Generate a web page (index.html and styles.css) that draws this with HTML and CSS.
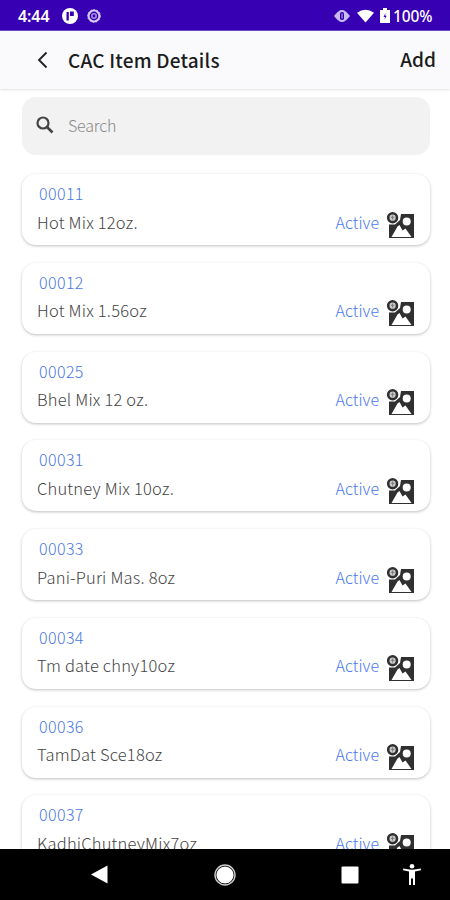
FILE: index.html
```html
<!DOCTYPE html>
<html lang="en">
<head>
<meta charset="utf-8">
<title>CAC Item Details</title>
<link rel="stylesheet" href="styles.css">
</head>
<body>
<svg width="0" height="0" class="defs" aria-hidden="true">
  <symbol id="picture" viewBox="0 0 28 28">
    <path d="M14 3H27V27H2V13.500L8 13.500L13 9Z" fill="#303030"/>
    <path d="M4.500 26L10.500 15.500L12.500 14L15.500 19.500L18.500 17.500L24.500 26Z" fill="#fff"/>
    <circle cx="19.700" cy="10.500" r="4" fill="#fff"/>
    <circle cx="5.600" cy="6.700" r="4.400" fill="#ccc" stroke="#303030" stroke-width="2.600"/>
    <path d="M3.800 6.300H7.400M5.600 4.500V8.500" stroke="#777" stroke-width="1"/>
  </symbol>
</svg>
<div class="phone">
  <div class="status">
    <span class="time">4:44</span>
    <svg class="s-p" width="16" height="16" viewBox="0 0 16 16"><circle cx="8" cy="8" r="8" fill="#fff"/><path d="M4.500 4H6.800V12.500H4.500ZM8 3.500H11.800V8H8Z" fill="#3700b3"/></svg>
    <svg class="s-c" width="14" height="14" viewBox="0 0 14 14"><g fill="none" stroke="#d5c9f2"><circle cx="7" cy="7" r="5.400" stroke-width="2"/><circle cx="7" cy="7" r="6.400" stroke-width="1" stroke-dasharray="1.600 1.600"/><circle cx="7" cy="7" r="2.200" stroke-width="1.600" opacity=".7"/></g></svg>
    <span class="grow"></span>
    <svg width="16" height="14" viewBox="0 0 16 14"><path d="M0 7L4 2.500H12L16 7L12 11.500H4Z" fill="#c9bbed"/><rect x="4.500" y="1" width="7" height="12" rx="3" fill="#c9bbed"/><rect x="6" y="3" width="4" height="8" rx="1.800" fill="#3700b3"/><path d="M8 4.500V9.500" stroke="#c9bbed"/></svg>
    <svg class="s-w" width="17" height="14" viewBox="0 0 18 14"><path d="M0 3.500Q9-3 18 3.500L9 14Z" fill="#fff"/></svg>
    <svg class="s-b" width="10" height="15" viewBox="0 0 10 15"><path d="M3 0H7V2H10V15H0V2H3Z" fill="#fff"/><path d="M5.500 5L3.500 9H5L4.600 11.500L6.700 7.800H5.200Z" fill="#3700b3"/></svg>
    <span class="pct">100%</span>
  </div>
  <header class="bar">
    <svg width="12" height="18" viewBox="0 0 12 18"><path d="M10.500 1.500L3 9L10.500 16.500" fill="none" stroke="#222" stroke-width="1.900"/></svg>
    <h1>CAC Item Details</h1>
    <span class="add">Add</span>
  </header>
  <main>
    <div class="search">
      <svg width="18" height="18" viewBox="0 0 18 18"><circle cx="7" cy="7" r="5.500" fill="none" stroke="#444" stroke-width="2.200"/><path d="M11 11L16.500 16.500" stroke="#444" stroke-width="2.600"/></svg>
      <span>Search</span>
    </div>
    <div class="list">
      <div class="card"><div class="code">00011</div><div class="row"><span>Hot Mix 12oz.</span><b>Active</b><svg><use href="#picture"/></svg></div></div>
      <div class="card"><div class="code">00012</div><div class="row"><span>Hot Mix 1.56oz</span><b>Active</b><svg><use href="#picture"/></svg></div></div>
      <div class="card"><div class="code">00025</div><div class="row"><span>Bhel Mix 12 oz.</span><b>Active</b><svg><use href="#picture"/></svg></div></div>
      <div class="card"><div class="code">00031</div><div class="row"><span>Chutney Mix 10oz.</span><b>Active</b><svg><use href="#picture"/></svg></div></div>
      <div class="card"><div class="code">00033</div><div class="row"><span>Pani-Puri Mas. 8oz</span><b>Active</b><svg><use href="#picture"/></svg></div></div>
      <div class="card"><div class="code">00034</div><div class="row"><span>Tm date chny10oz</span><b>Active</b><svg><use href="#picture"/></svg></div></div>
      <div class="card"><div class="code">00036</div><div class="row"><span>TamDat Sce18oz</span><b>Active</b><svg><use href="#picture"/></svg></div></div>
      <div class="card"><div class="code">00037</div><div class="row"><span>KadhiChutneyMix7oz</span><b>Active</b><svg><use href="#picture"/></svg></div></div>
    </div>
  </main>
  <nav class="nav">
    <svg class="n-back" width="17" height="19" viewBox="0 0 17 19"><path d="M0 9.500L16.500 .5V18.500Z" fill="#fff"/></svg>
    <svg class="n-home" width="22" height="22" viewBox="0 0 22 22"><circle cx="11" cy="11" r="8.600" fill="#fff"/><circle cx="11" cy="11" r="10" fill="none" stroke="#ccc" stroke-width="1.400"/></svg>
    <svg class="n-sq" width="18" height="18" viewBox="0 0 18 18"><rect x=".5" y=".5" width="17" height="17" rx="1" fill="#fff"/></svg>
    <svg class="n-acc" width="18" height="21" viewBox="0 0 18 21"><circle cx="9" cy="2.300" r="2.300" fill="#fff"/><path d="M.3 4.500Q9 6.800 17.700 4.500L18 6.300L12 7.600V21H10V14.500H8V21H6V7.600L0 6.300Z" fill="#fff"/></svg>
  </nav>
</div>
</body>
</html>
```
FILE: styles.css
```css
* { box-sizing: border-box; }
body { margin: 0; background: #fff; font-family: "Noto Sans CJK SC", "Noto Sans", sans-serif; }
svg { display: block; flex: none; }
.defs { position: absolute; }
.phone { width: 450px; height: 900px; display: flex; flex-direction: column; overflow: hidden; }
.status { flex: none; height: 31px; background: #3700b3; color: #fff; display: flex; align-items: center; padding: 1px 17px 0 18px; font: 500 16px/20px "Noto Sans", sans-serif; border-bottom: 1px solid #6a4bc8; }
.time { width: 44px; letter-spacing: -.1px; font-weight: 600; }
.s-c { margin-left: 9px; }
.s-w { margin-left: 7px; }
.s-b { margin-left: 6px; }
.pct { width: 40px; margin-left: 3px; font-size: 15.500px; letter-spacing: -.1px; white-space: nowrap; }
.grow { flex: 1; }
.bar { flex: none; height: 58px; background: #fafafc; display: flex; align-items: center; padding: 0 14px 0 36px; box-shadow: 0 1px 2px rgba(0,0,0,.12); color: #1c1c1c; }
h1 { margin: 0 0 0 20px; font-size: 19px; line-height: 28px; font-weight: 500; flex: 1; letter-spacing: .2px; }
.add { font-size: 19px; line-height: 28px; font-weight: 500; margin-top: -2px; }
main { flex: 1; min-height: 0; overflow: hidden; padding: 8px 20px 0 22px; }
.search { height: 58px; border-radius: 14px; background: #f2f2f2; display: flex; align-items: center; padding-left: 14px; font-size: 16px; font-weight: 300; color: #888; }
.search span { margin: -2px 0 0 14px; letter-spacing: -.2px; }
.search svg { margin-top: -2px; }
.list { margin-top: 19px; display: flex; flex-direction: column; gap: 17.750px; }
.card { flex: none; height: 71px; border-radius: 14px; background: #fff; box-shadow: 0 1px 3px rgba(0,0,0,.25); padding: 7px 15px 0; font-weight: 300; }
.code { padding-left: 2px; font-size: 16px; line-height: 24px; color: #4878e0; letter-spacing: .4px; }
.row { display: flex; align-items: center; height: 34px; font-size: 16.500px; line-height: 24px; color: #444; }
.row span { flex: 1; white-space: nowrap; letter-spacing: .2px; margin-top: -1px; }
.row b { font-size: 16px; font-weight: 300; color: #4878f0; margin: -1px 8px 0 0; }
.row svg { width: 28px; height: 28px; margin-top: 5px; }
.nav { flex: none; height: 51px; background: #000; display: flex; align-items: center; padding-left: 91px; }
.n-home { margin-left: 106px; }
.n-sq { margin-left: 105px; }
.n-acc { margin-left: 44px; }
```
